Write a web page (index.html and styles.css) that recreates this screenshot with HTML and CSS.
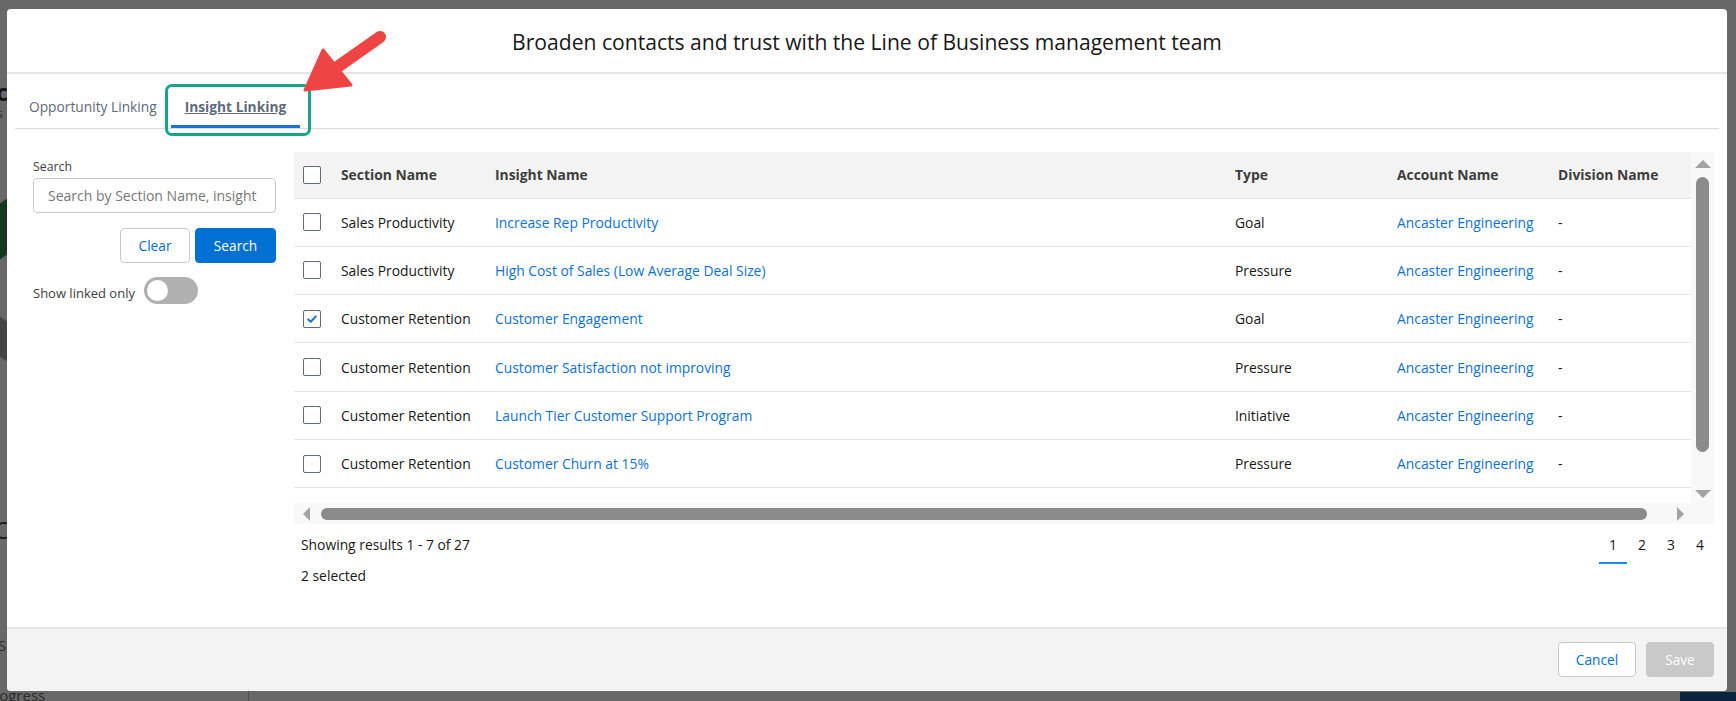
FILE: index.html
```html
<!DOCTYPE html>
<html lang="en">
<head>
<meta charset="utf-8">
<title>Insight Linking</title>
<link rel="stylesheet" href="styles.css">
</head>
<body>
<div class="backdrop">
  <span class="bg-c">c</span>
  <span class="bg-s">s</span>
  <span class="bg-green"></span>
  <span class="bg-dark"></span>
  <span class="bg-C">C</span>
  <span class="bg-st">St</span>
  <span class="bg-progress">Progress</span>
  <span class="bg-vline"></span>
  <span class="bg-navy"></span>
</div>

<div class="modal">
  <header class="modal-header">
    <h2 class="modal-title">Broaden contacts and trust with the Line of Business management team</h2>
  </header>

  <div class="modal-body">
    <nav class="tabs">
      <a class="tab">Opportunity Linking</a>
      <a class="tab tab-active">Insight Linking</a>
    </nav>

    <div class="content">
      <aside class="filters">
        <label class="field-label">Search</label>
        <div class="input">Search by Section Name, insight</div>
        <div class="btn-row">
          <button class="btn btn-neutral">Clear</button>
          <button class="btn btn-brand">Search</button>
        </div>
        <div class="toggle-row">
          <span class="toggle-label">Show linked only</span>
          <span class="toggle"><span class="knob"></span></span>
        </div>
      </aside>

      <section class="results">
        <div class="grid-wrap">
          <div class="viewport">
            <table class="grid">
              <colgroup>
                <col class="c-cb"><col class="c-sec"><col class="c-ins"><col class="c-type"><col class="c-acc"><col class="c-div">
              </colgroup>
              <thead>
                <tr>
                  <th class="cb-cell"><span class="cb"></span></th>
                  <th>Section Name</th>
                  <th>Insight Name</th>
                  <th>Type</th>
                  <th>Account Name</th>
                  <th>Division Name</th>
                </tr>
              </thead>
              <tbody>
                <tr>
                  <td class="cb-cell"><span class="cb"></span></td>
                  <td>Sales Productivity</td>
                  <td><a class="link">Increase Rep Productivity</a></td>
                  <td>Goal</td>
                  <td><a class="link">Ancaster Engineering</a></td>
                  <td>-</td>
                </tr>
                <tr>
                  <td class="cb-cell"><span class="cb"></span></td>
                  <td>Sales Productivity</td>
                  <td><a class="link">High Cost of Sales (Low Average Deal Size)</a></td>
                  <td>Pressure</td>
                  <td><a class="link">Ancaster Engineering</a></td>
                  <td>-</td>
                </tr>
                <tr>
                  <td class="cb-cell"><span class="cb cb-checked"><svg viewBox="0 0 12 12" width="12" height="12"><path d="M2.2 6.4 L4.8 8.8 L9.8 3.4" fill="none" stroke="#1a73d6" stroke-width="2" stroke-linecap="round" stroke-linejoin="round"/></svg></span></td>
                  <td>Customer Retention</td>
                  <td><a class="link">Customer Engagement</a></td>
                  <td>Goal</td>
                  <td><a class="link">Ancaster Engineering</a></td>
                  <td>-</td>
                </tr>
                <tr>
                  <td class="cb-cell"><span class="cb"></span></td>
                  <td>Customer Retention</td>
                  <td><a class="link">Customer Satisfaction not improving</a></td>
                  <td>Pressure</td>
                  <td><a class="link">Ancaster Engineering</a></td>
                  <td>-</td>
                </tr>
                <tr>
                  <td class="cb-cell"><span class="cb"></span></td>
                  <td>Customer Retention</td>
                  <td><a class="link">Launch Tier Customer Support Program</a></td>
                  <td>Initiative</td>
                  <td><a class="link">Ancaster Engineering</a></td>
                  <td>-</td>
                </tr>
                <tr>
                  <td class="cb-cell"><span class="cb"></span></td>
                  <td>Customer Retention</td>
                  <td><a class="link">Customer Churn at 15%</a></td>
                  <td>Pressure</td>
                  <td><a class="link">Ancaster Engineering</a></td>
                  <td>-</td>
                </tr>
                <tr>
                  <td class="cb-cell"><span class="cb"></span></td>
                  <td>Customer Retention</td>
                  <td><a class="link">Customer Loyalty</a></td>
                  <td>Goal</td>
                  <td><a class="link">Ancaster Engineering</a></td>
                  <td>-</td>
                </tr>
              </tbody>
            </table>
          </div>
          <div class="vscroll">
            <span class="arrow arrow-up"></span>
            <span class="vthumb"></span>
            <span class="arrow arrow-down"></span>
          </div>
          <div class="hscroll">
            <span class="arrow arrow-left"></span>
            <span class="hthumb"></span>
            <span class="arrow arrow-right"></span>
          </div>
          <div class="corner"></div>
        </div>

        <div class="results-footer">
          <div class="meta">
            <p>Showing results 1 - 7 of 27</p>
            <p>2 selected</p>
          </div>
          <div class="pager">
            <span class="page page-current">1</span>
            <span class="page">2</span>
            <span class="page">3</span>
            <span class="page">4</span>
          </div>
        </div>
      </section>
    </div>
  </div>

  <footer class="modal-footer">
    <button class="btn btn-neutral btn-cancel">Cancel</button>
    <button class="btn btn-disabled">Save</button>
  </footer>
</div>

<div class="annot-box"></div>
<svg class="annot-arrow" width="1736" height="701" viewBox="0 0 1736 701">
  <line x1="380" y1="37" x2="336" y2="68" stroke="#ef4444" stroke-width="12" stroke-linecap="round"/>
  <polygon points="305,90 323,50 351,85" fill="#ef4444" stroke="#ef4444" stroke-width="3" stroke-linejoin="round"/>
</svg>
</body>
</html>
```

FILE: styles.css
```css
* { box-sizing: border-box; }

html, body {
  margin: 0;
  padding: 0;
}

body {
  position: relative;
  width: 1736px;
  height: 701px;
  overflow: hidden;
  background: #686868;
  font-family: "Segoe UI", "Open Sans", "Noto Sans", Arial, sans-serif;
  font-size: 13.85px;
  color: #181818;
}

/* ---------- page behind the overlay ---------- */
.backdrop {
  position: absolute;
  inset: 0;
}
.backdrop span { position: absolute; line-height: 1; }
.bg-c { left: -4px; top: 80px; font-size: 24px; font-weight: 700; color: #151515; }
.bg-s { left: -3px; top: 108px; font-size: 12px; color: #2a2a2a; }
.bg-green {
  left: -6px; top: 202px; width: 16px; height: 56px;
  background: #15391e; transform: skewY(-35deg);
}
.bg-dark {
  left: -6px; top: 318px; width: 16px; height: 40px;
  background: #444; transform: skewY(35deg);
}
.bg-C { left: -6px; top: 518px; font-size: 24px; color: #1a1a1a; }
.bg-st { left: -2px; top: 638px; font-size: 15px; color: #2a2a2a; }
.bg-progress { left: -16px; top: 688px; font-size: 15px; color: #2a2a2a; }
.bg-vline { left: 248px; top: 691px; width: 1px; height: 10px; background: #505050; }
.bg-navy { left: 1680px; top: 692px; width: 60px; height: 12px; background: #0c2340; }

/* ---------- modal ---------- */
.modal {
  position: absolute;
  left: 7px;
  top: 9px;
  width: 1720px;
  height: 682px;
  background: #fff;
  border-radius: 4px;
  display: flex;
  flex-direction: column;
  overflow: hidden;
}

.modal-header {
  height: 65px;
  padding-top: 18px;
  border-bottom: 2px solid #e5e5e5;
  text-align: center;
}
.modal-title {
  margin: 0;
  font-weight: 400;
  font-size: 21.1px;
  line-height: 30px;
  color: #181818;
}

.modal-body {
  flex: 1;
  display: flex;
  flex-direction: column;
  min-height: 0;
}

/* ---------- tabs ---------- */
.tabs {
  display: flex;
  margin: 0 8px;
  height: 55px;
  border-bottom: 1px solid #dddbda;
}
.tab {
  display: block;
  height: 54px;
  padding: 23px 14px 0;
  line-height: 20px;
  font-size: 13.75px;
  color: #5e6a7b;
}
.tab-active {
  font-weight: 700;
  text-decoration: underline;
  box-shadow: inset 0 -3px 0 #1f6fd8;
}

/* ---------- content ---------- */
.content {
  flex: 1;
  display: flex;
  gap: 18px;
  padding: 23px 13px 0 26px;
}

.filters {
  width: 243px;
  flex: none;
  padding-top: 6px;
}
.field-label {
  display: block;
  font-size: 12.3px;
  line-height: 18px;
  color: #3e3e3c;
  margin-bottom: 2px;
}
.input {
  height: 35px;
  border: 1px solid #c9c9c9;
  border-radius: 4px;
  padding: 0 10px 0 14px;
  line-height: 33px;
  font-size: 14px;
  color: #777;
  white-space: nowrap;
  overflow: hidden;
}
.btn-row {
  display: flex;
  justify-content: flex-end;
  gap: 5px;
  margin-top: 15px;
}
.btn {
  height: 35px;
  border-radius: 4px;
  font-family: inherit;
  font-size: 13.7px;
  padding: 0 16px;
  line-height: 33px;
  border: 1px solid #c9c9c9;
  background: #fff;
  color: #0070d2;
}
.btn-row .btn-neutral { width: 70px; padding: 0; }
.btn-brand {
  width: 81px;
  padding: 0;
  background: #0070d2;
  border-color: #0070d2;
  color: #fff;
}
.toggle-row {
  display: flex;
  align-items: center;
  gap: 9px;
  margin-top: 14px;
}
.toggle-label {
  font-size: 13px;
  line-height: 18px;
  color: #3e3e3c;
  padding-top: 4px;
}
.toggle {
  position: relative;
  width: 54px;
  height: 27px;
  border-radius: 14px;
  background: #b0b0b0;
}
.knob {
  position: absolute;
  left: 3px;
  top: 3px;
  width: 21px;
  height: 21px;
  border-radius: 50%;
  background: #fff;
}

/* ---------- results / grid ---------- */
.results {
  flex: 1;
  min-width: 0;
  display: flex;
  flex-direction: column;
}
.grid-wrap {
  display: grid;
  grid-template-columns: 1397px 23px;
  grid-template-rows: 351px 21px;
}
.viewport {
  overflow: hidden;
}
.grid {
  width: 1418px;
  table-layout: fixed;
  border-collapse: collapse;
}
.c-cb { width: 39px; }
.c-sec { width: 154px; }
.c-ins { width: 740px; }
.c-type { width: 162px; }
.c-acc { width: 161px; }
.c-div { width: 162px; }

.grid th, .grid td {
  padding: 0 8px;
  text-align: left;
  white-space: nowrap;
  border-bottom: 1px solid #e5e5e5;
}
.grid th {
  height: 46px;
  background: #f3f3f3;
  font-weight: 700;
  color: #3e3e3c;
}
.grid td {
  height: 48.3px;
  color: #181818;
}
.grid .cb-cell { padding: 0 0 0 9px; }
.cb {
  display: flex;
  align-items: center;
  justify-content: center;
  width: 18px;
  height: 18px;
  border: 1px solid #5f6b7a;
  border-radius: 2px;
  background: #fff;
}
.cb svg { display: block; margin-top: 1px; }
.link { color: #0b72d6; }

.vscroll, .hscroll, .corner { background: #f8f8f8; }
.vscroll {
  display: flex;
  flex-direction: column;
  align-items: center;
  padding: 8px 0 5px;
}
.vthumb {
  width: 13px;
  height: 275px;
  margin-top: 9px;
  border-radius: 7px;
  background: #8b8b8b;
}
.vscroll .arrow-down { margin-top: auto; }
.hscroll {
  display: flex;
  align-items: center;
  padding: 0 7px 0 9px;
}
.hthumb {
  flex: 1;
  height: 12px;
  margin: 0 30px 0 11px;
  border-radius: 6px;
  background: #8b8b8b;
}
.arrow { width: 0; height: 0; display: block; flex: none; }
.arrow-up { border-left: 8px solid transparent; border-right: 8px solid transparent; border-bottom: 8px solid #a3a3a3; }
.arrow-down { border-left: 8px solid transparent; border-right: 8px solid transparent; border-top: 8px solid #a3a3a3; }
.arrow-left { border-top: 7px solid transparent; border-bottom: 7px solid transparent; border-right: 7px solid #a3a3a3; }
.arrow-right { border-top: 7px solid transparent; border-bottom: 7px solid transparent; border-left: 7px solid #a3a3a3; }

.results-footer {
  display: flex;
  justify-content: space-between;
  align-items: flex-start;
  padding: 11px 0 0 7px;
}
.meta p {
  margin: 0 0 11px;
  line-height: 20px;
  color: #181818;
}
.pager {
  display: flex;
  gap: 1px;
}
.page {
  width: 28px;
  height: 29px;
  text-align: center;
  line-height: 20px;
  color: #181818;
}
.page-current {
  box-shadow: inset 0 -2px 0 #1589ee;
}

/* ---------- footer ---------- */
.modal-footer {
  height: 64px;
  flex: none;
  background: #f3f3f3;
  border-top: 2px solid #e5e5e5;
  display: flex;
  justify-content: flex-end;
  gap: 10px;
  padding: 13px 13px 0 0;
}
.btn-cancel { width: 78px; padding: 0; }
.btn-disabled {
  width: 68px;
  padding: 0;
  background: #c9c9c9;
  border-color: #c9c9c9;
  color: #fff;
}

/* ---------- annotation overlay ---------- */
.annot-box {
  position: absolute;
  left: 165px;
  top: 84px;
  width: 146px;
  height: 52px;
  border: 3px solid #15a68a;
  border-radius: 7px;
}
.annot-arrow {
  position: absolute;
  left: 0;
  top: 0;
  pointer-events: none;
}
```
